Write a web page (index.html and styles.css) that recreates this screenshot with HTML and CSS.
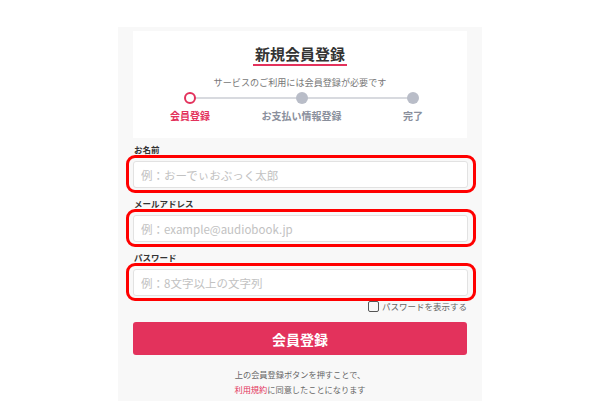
FILE: index.html
```html
<!DOCTYPE html>
<html lang="ja">
<head>
    <meta charset="UTF-8">
    <meta name="viewport" content="width=device-width, initial-scale=1.0">
    <title>新規会員登録</title>
    <link rel="stylesheet" href="styles.css">
</head>
<body>
    <div class="page">
        <div class="card">
            <h2 class="title">新規会員登録</h2>
            <p class="lead">サービスのご利用には会員登録が必要です</p>
            <div class="steps">
                <div class="step active">
                    <span class="dot"></span>
                    <span class="step-name">会員登録</span>
                </div>
                <div class="step">
                    <span class="dot"></span>
                    <span class="step-name">お支払い情報登録</span>
                </div>
                <div class="step">
                    <span class="dot"></span>
                    <span class="step-name">完了</span>
                </div>
            </div>
        </div>

        <form class="form" onsubmit="return false">
            <label class="label">お名前</label>
            <div class="mark">
                <input class="input" type="text" placeholder="例：おーでぃおぶっく太郎">
            </div>

            <label class="label">メールアドレス</label>
            <div class="mark">
                <input class="input" type="email" placeholder="例：example@audiobook.jp">
            </div>

            <label class="label">パスワード</label>
            <div class="mark">
                <input class="input" type="password" placeholder="例：8文字以上の文字列">
            </div>

            <label class="show-pass">
                <span class="box"></span>パスワードを表示する
            </label>

            <button class="submit" type="submit">会員登録</button>

            <p class="note">上の会員登録ボタンを押すことで、<br><a href="#">利用規約</a>に同意したことになります</p>
        </form>
    </div>
</body>
</html>
```

FILE: styles.css
```css
body {
    margin: 0;
    background-color: #fff;
    font-family: "Noto Sans CJK JP", "Noto Sans", sans-serif;
    color: #333;
}
.page {
    width: 334px;
    min-height: 370px;
    margin: 27px auto 0;
    padding: 4px 15px 0;
    background-color: #f8f8f8;
}
.card {
    background-color: #fff;
    padding: 10px 0 15px;
    text-align: center;
}
.title {
    display: inline-block;
    margin: 0;
    font-size: 15px;
    line-height: 18px;
    font-weight: bold;
    color: #333;
    padding: 0 2px 1px;
    border-bottom: 2px solid #e3325c;
}
.lead {
    margin: 9px 0 0;
    font-size: 9.1px;
    line-height: 14px;
    color: #777;
}
.steps {
    position: relative;
    display: flex;
    justify-content: space-between;
    margin-top: 3px;
    padding: 0 14px 0 17px;
}
.steps::before {
    content: "";
    position: absolute;
    left: 57px;
    right: 54px;
    top: 5px;
    height: 2px;
    background-color: #d8dadf;
}
.step {
    position: relative;
    width: 80px;
    display: flex;
    flex-direction: column;
    align-items: center;
}
.dot {
    width: 12px;
    height: 12px;
    border-radius: 50%;
    background-color: #b9bdc8;
    box-sizing: border-box;
}
.step.active .dot {
    background-color: #fff;
    border: 2.5px solid #e3325c;
}
.step-name {
    margin-top: 5px;
    font-size: 10px;
    line-height: 14px;
    font-weight: bold;
    color: #8a8f9c;
    white-space: nowrap;
}
.step.active .step-name {
    color: #e3325c;
}
.form {
    display: flex;
    flex-direction: column;
    margin-top: 5px;
}
.label {
    font-size: 8.5px;
    line-height: 12px;
    font-weight: bold;
    color: #333;
    margin-left: 1px;
}
.label ~ .label {
    margin-top: 4px;
}
.mark {
    margin: 0 -9px 0 -7px;
    padding: 3px 5px 2px 4px;
    border: 3px solid #f00;
    border-radius: 9px;
}
.input {
    display: block;
    width: 100%;
    height: 27px;
    box-sizing: border-box;
    padding: 0 7px;
    border: 1px solid #e2e2e2;
    border-radius: 3px;
    background-color: #fff;
    font-family: inherit;
    font-size: 11.5px;
    color: #333;
}
.input::placeholder {
    color: #c2c2c2;
}
.show-pass {
    align-self: flex-end;
    display: flex;
    align-items: center;
    margin-top: -1px;
    font-size: 8.5px;
    line-height: 12px;
    color: #666;
}
.box {
    width: 9px;
    height: 9px;
    border: 1px solid #555;
    border-radius: 2px;
    margin-right: 3px;
}
.submit {
    margin-top: 10px;
    height: 33px;
    border: none;
    border-radius: 3px;
    background-color: #e3325c;
    color: #fff;
    font-family: inherit;
    font-size: 14px;
    font-weight: bold;
    cursor: pointer;
}
.note {
    margin: 12px 0 0;
    text-align: center;
    font-size: 8.2px;
    line-height: 15px;
    color: #666;
}
.note a {
    color: #e3325c;
    text-decoration: none;
}
```
